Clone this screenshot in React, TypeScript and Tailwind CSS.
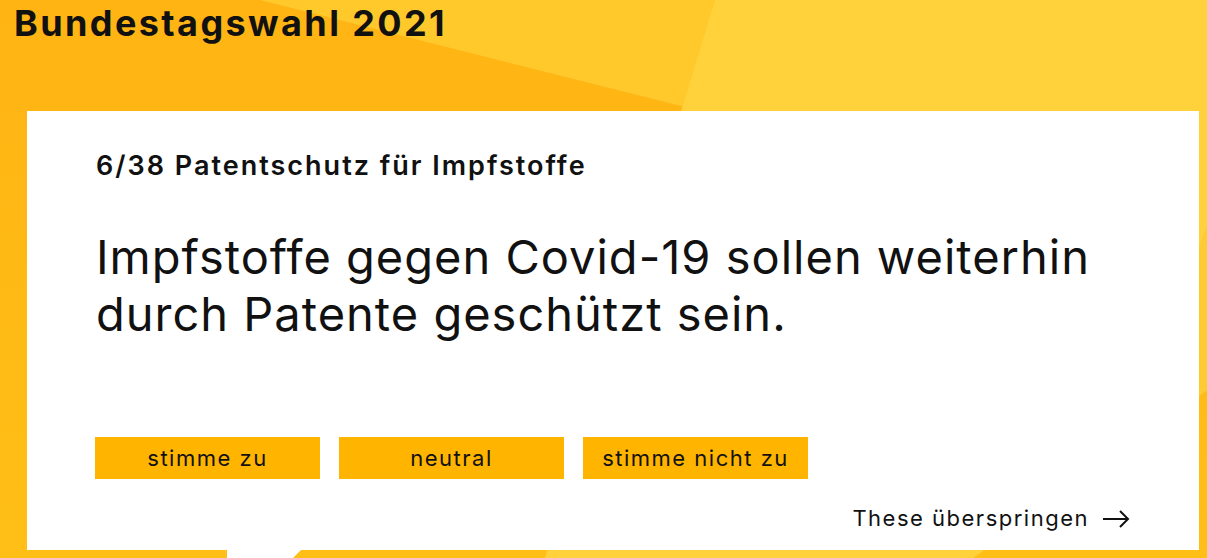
import React from 'react';

const font = { fontFamily: 'Inter, "Noto Sans", sans-serif' };

function Backdrop() {
    return (
        <svg className="absolute inset-0 w-full h-full" viewBox="0 0 1207 558" preserveAspectRatio="none">
            <defs>
                <linearGradient id="base" x1="0" y1="0" x2="0" y2="1">
                    <stop offset="0" stopColor="#ffb414" />
                    <stop offset="1" stopColor="#ffbf16" />
                </linearGradient>
            </defs>
            <rect x="0" y="0" width="1207" height="558" fill="url(#base)" />
            <polygon points="260,0 1207,0 1207,238 697,110" fill="#ffc82b" />
            <polygon points="715,0 1207,0 1207,225 1207,390 973,558 545,558" fill="#ffd23c" />
            <polygon points="1207,225 1207,390 1120,450" fill="#ffcb32" />
        </svg>
    );
}

export default function App() {
    return (
        <div className="relative w-[1207px] h-[558px] overflow-hidden" style={font}>
            <Backdrop />
            <div className="relative">
                <h1 className="pl-[14px] pt-[3px] h-[111px] text-[36px] leading-[40px] font-bold text-[#111] tracking-[2.4px]">
                    Bundestagswahl 2021
                </h1>

                <div className="relative ml-[27px] w-[1172px] h-[439px] bg-white pl-[69px] pr-[68px] pt-[39px]">
                    <div className="text-[27px] leading-[32px] font-semibold text-[#111] tracking-[2px]">
                        6/38 Patentschutz für Impfstoffe
                    </div>
                    <p className="mt-[46px] text-[47px] leading-[57px] text-[#111] tracking-[1px]">
                        Impfstoffe gegen Covid-19 sollen weiterhin durch Patente geschützt sein.
                    </p>
                    <div className="flex gap-[19px] mt-[95px] -ml-[1px]">
                        {['stimme zu', 'neutral', 'stimme nicht zu'].map((label) => (
                            <button key={label} className="w-[225px] h-[42px] bg-[#ffb500] text-[22px] text-[#111] leading-none tracking-[1.5px]">
                                {label}
                            </button>
                        ))}
                    </div>
                    <div className="flex justify-end items-center gap-[13px] mt-[23px] mr-[1px] text-[22px] text-[#111] tracking-[1.5px]">
                        <span>These überspringen</span>
                        <svg width="28" height="18" viewBox="0 0 28 18" fill="none" stroke="#111" strokeWidth="2">
                            <path d="M1 9h25M18 1l8 8-8 8" />
                        </svg>
                    </div>
                    <div className="absolute left-[200px] top-full w-0 h-0 border-l-[74px] border-l-white border-b-[74px] border-b-transparent" />
                </div>
            </div>
        </div>
    );
}
